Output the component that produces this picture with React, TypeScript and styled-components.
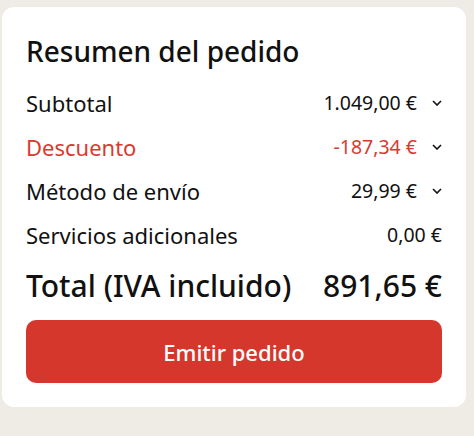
import React from "react";
import styled, { createGlobalStyle } from "styled-components";

const Global = createGlobalStyle`
  html, body { margin: 0; padding: 0; background: #efebe5; }
  body { font-family: "Noto Sans", "Open Sans", sans-serif; color: #111; }
`;

const Page = styled.div`
  padding: 7px 8px 28px 2px;
`;

const Card = styled.section`
  background: #fff;
  border-radius: 12px;
  padding: 25px 24px 24px 24px;
  display: flex;
  flex-direction: column;
`;

const Title = styled.h2`
  margin: 0 0 11px 0;
  font-size: 28px;
  font-weight: 500;
  line-height: 38px;
  color: #111;
`;

const Row = styled.div<{ $accent?: boolean }>`
  display: flex;
  align-items: center;
  justify-content: space-between;
  height: 44px;
  color: ${(p) => (p.$accent ? "#d93a2f" : "#111")};
`;

const Label = styled.span`
  font-size: 22px;
  line-height: 44px;
`;

const ValueWrap = styled.span`
  display: flex;
  align-items: center;
  gap: 15px;
  font-size: 19.5px;
  line-height: 44px;
`;

const ChevronSlot = styled.span`
  width: 10px;
  display: inline-flex;
  color: #111;
  margin-top: -1px;
`;

const TotalRow = styled.div`
  display: flex;
  justify-content: space-between;
  align-items: center;
  height: 56px;
  font-size: 30px;
  font-weight: 500;
  margin-bottom: 7px;
`;

const Button = styled.button`
  height: 63px;
  border: none;
  border-radius: 10px;
  background: #d6372c;
  color: #fff;
  font-family: inherit;
  font-size: 22px;
  font-weight: 500;
  cursor: pointer;
`;

const Chevron = () => (
  <svg width="10" height="6" viewBox="0 0 10 6">
    <path d="M1 1l4 4 4-4" fill="none" stroke="currentColor" strokeWidth="1.6" />
  </svg>
);

const rows = [
  { label: "Subtotal", value: "1.049,00 €", chevron: true },
  { label: "Descuento", value: "-187,34 €", chevron: true, accent: true },
  { label: "Método de envío", value: "29,99 €", chevron: true },
  { label: "Servicios adicionales", value: "0,00 €", chevron: false },
];

export default function App() {
  return (
    <>
      <Global />
      <Page>
        <Card>
          <Title>Resumen del pedido</Title>
          {rows.map((r) => (
            <Row key={r.label} $accent={r.accent}>
              <Label>{r.label}</Label>
              <ValueWrap>
                {r.value}
                {r.chevron ? (
                  <ChevronSlot>
                    <Chevron />
                  </ChevronSlot>
                ) : null}
              </ValueWrap>
            </Row>
          ))}
          <TotalRow>
            <span>Total (IVA incluido)</span>
            <span>891,65 €</span>
          </TotalRow>
          <Button>Emitir pedido</Button>
        </Card>
      </Page>
    </>
  );
}
